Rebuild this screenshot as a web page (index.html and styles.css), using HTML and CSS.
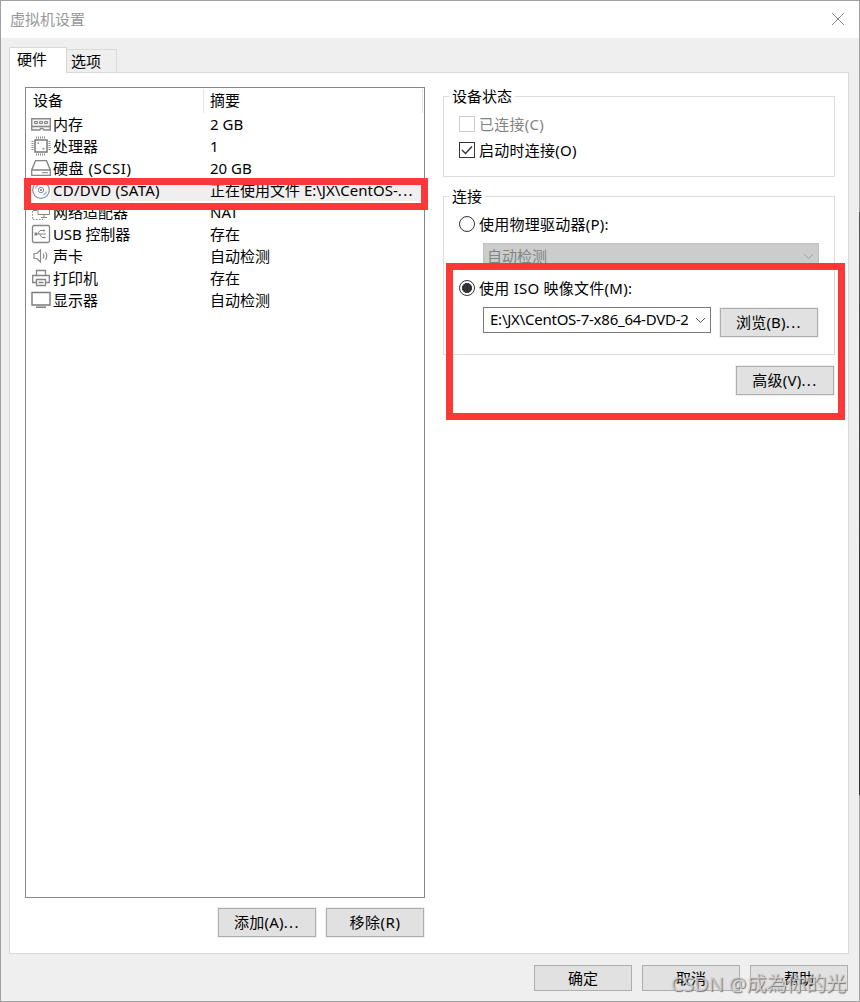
FILE: index.html
```html
<!DOCTYPE html>
<html lang="zh-CN">
<head>
<meta charset="utf-8">
<title>虚拟机设置</title>
<link rel="stylesheet" href="styles.css">
</head>
<body>
<div class="window">
  <header class="titlebar">
    <span class="title">虚拟机设置</span>
    <svg class="close" width="14" height="14" viewBox="0 0 14 14"><path d="M1 1l12 12M13 1L1 13" stroke="#8a8a8a" fill="none"/></svg>
  </header>
  <nav class="tabs">
    <div class="tab active">硬件</div>
    <div class="tab">选项</div>
  </nav>
  <main class="panel">
    <section class="left">
      <div class="list">
        <div class="head"><span class="h-device">设备</span><span class="h-summary">摘要</span></div>
        <div class="row">
          <svg class="icon" viewBox="0 0 20 20"><path d="M.7 4.700h18.600v11.300h-6.500l-1-1.500h-2l-1 1.500H.7z" fill="#f2f2f2" stroke="#8b8b8b" stroke-width="1.400"/><path d="M3.500 7.500h3v2h-3zM8.500 7.500h3v2h-3zM13.500 7.500h3v2h-3z" fill="#ddd" stroke="#858585"/><path d="M1 12.500h18" stroke="#858585" stroke-width="1.500"/></svg>
          <span class="name">内存</span><span class="value">2 GB</span></div>
        <div class="row">
          <svg class="icon" viewBox="0 0 20 20"><rect x="4" y="4" width="12" height="12" fill="none" stroke="#777" stroke-width="1.500"/><path d="M5.500 .5v2M7.500 .5v2M9.500 .5v2M11.500 .5v2M13.500 .5v2M5.500 17.500v2M7.500 17.500v2M9.500 17.500v2M11.500 17.500v2M13.500 17.500v2M.5 5.500h2M.5 7.500h2M.5 9.500h2M.5 11.500h2M.5 13.500h2M17.500 5.500h2M17.500 7.500h2M17.500 9.500h2M17.500 11.500h2M17.500 13.500h2" stroke="#888"/><path d="M6.500 6.500h1.500v1.500H6.500zM11.500 12h2v1.500h-2z" fill="#888"/></svg>
          <span class="name">处理器</span><span class="value">1</span></div>
        <div class="row">
          <svg class="icon" viewBox="0 0 20 20"><path d="M4.500 2.700h11l3.800 9.300v5.300H.7V12zM.7 12h18.600" fill="none" stroke="#858585" stroke-width="1.300"/><path d="M11 14.700h6" stroke="#858585"/></svg>
          <span class="name wide">硬盘 (SCSI)</span><span class="value">20 GB</span></div>
        <div class="row selected">
          <svg class="icon" viewBox="0 0 20 20"><g fill="none"><circle cx="10" cy="10" r="8.300" stroke="#7f98a8" stroke-width="1.300"/><circle cx="10" cy="10" r="2.700" stroke="#7894a5"/><path d="M4.500 8.500a6 6 0 0 1 3-3.500M15.500 11.500a6 6 0 0 1-3 3.500" stroke="#a3bccb" stroke-width="1.500"/></g><circle cx="10" cy="10" r="1" fill="#4f7892"/></svg>
          <span class="name cd">CD/DVD (SATA)</span><span class="value file">正在使用文件 E:\JX\CentOS-<span class="dots">...</span></span></div>
        <div class="row">
          <svg class="icon" viewBox="0 0 20 20"><g fill="none" stroke="#858585"><path d="M7 2.500h11.500v10H7zM10 15.500h6M13 13v2"/><path d="M1.500 6v11.500H12" stroke-dasharray="1.500 1.500"/><path d="M2 8.500h4"/></g></svg>
          <span class="name">网络适配器</span><span class="value">NAT</span></div>
        <div class="row">
          <svg class="icon" viewBox="0 0 20 20"><g fill="none" stroke="#858585"><rect x="1.500" y="1.500" width="17" height="17" rx="1.500" stroke-width="1.300"/><path d="M4 10h11M6.500 10l2.500-3.500h3.500M8.500 10l2.500 3.500h2.500"/></g><path d="M3.500 8.500h2.500v3h-2.500zM12 5.700h2v1.600h-2zM12.500 12.700h2v1.600h-2z" fill="#858585"/></svg>
          <span class="name usb">USB 控制器</span><span class="value">存在</span></div>
        <div class="row">
          <svg class="icon" viewBox="0 0 20 20"><path d="M3 7.500h3l3.500-3.500v12L6 12.500H3zM12 7.500q1.700 2.500 0 5M14.500 6q2.500 4 0 8" fill="none" stroke="#8b8b8b" stroke-width="1.200"/></svg>
          <span class="name">声卡</span><span class="value">自动检测</span></div>
        <div class="row">
          <svg class="icon" viewBox="0 0 20 20"><path d="M5.500 7V2.500h9V7M5 14.500H1.700V7.500h16.600v7H15M5.500 11.500h9v6h-9zM7.500 14.500h5" fill="none" stroke="#858585" stroke-width="1.300"/></svg>
          <span class="name">打印机</span><span class="value">存在</span></div>
        <div class="row">
          <svg class="icon" viewBox="0 0 20 20"><path d="M1 2.500h18v12.500H1z" fill="none" stroke="#7b7b7b" stroke-width="1.400"/><path d="M5 17.200h10" stroke="#858585" stroke-width="1.600"/></svg>
          <span class="name">显示器</span><span class="value">自动检测</span></div>
      </div>
      <div class="buttons">
        <button class="btn">添加(A)<span class="dots">...</span></button>
        <button class="btn remove">移除(R)</button>
      </div>
    </section>
    <section class="right">
      <div class="group status">
        <span class="legend">设备状态</span>
        <label class="option disabled"><span class="check"></span>已连接(C)</label>
        <label class="option"><span class="check"><svg width="14" height="14" viewBox="0 0 14 14"><path d="M2 7l3.500 3.500L12 3.500" fill="none" stroke="#333" stroke-width="1.400"/></svg></span>启动时连接(O)</label>
      </div>
      <div class="group connection">
        <span class="legend">连接</span>
        <label class="option"><span class="radio"></span>使用物理驱动器(P):</label>
        <div class="combo off"><span class="combo-text">自动检测</span><svg class="arrow" width="11" height="7" viewBox="0 0 11 7"><path d="M1 1l4.500 4.500L10 1" fill="none" stroke="#a0a0a0"/></svg></div>
        <label class="option iso"><span class="radio on"></span><span class="iso-text">使用 ISO 映像文件(M):</span></label>
        <div class="browse">
          <div class="combo"><span class="combo-text path">E:\JX\CentOS-7-x86_64-DVD-2</span><svg class="arrow" width="11" height="7" viewBox="0 0 11 7"><path d="M1 1l4.500 4.500L10 1" fill="none" stroke="#555"/></svg></div>
          <button class="btn">浏览(B)<span class="dots">...</span></button>
        </div>
      </div>
      <button class="btn advanced">高级(V)<span class="dots">...</span></button>
    </section>
  </main>
  <footer class="footer">
    <button class="btn">确定</button>
    <button class="btn">取消</button>
    <button class="btn">帮助</button>
  </footer>
  <div class="edge"></div>
  <div class="mark mark-device"></div>
  <div class="mark mark-iso"></div>
  <div class="watermark">CSDN @成為你的光</div>
</div>
</body>
</html>
```
FILE: styles.css
```css
* { box-sizing: border-box; }
body { margin: 0; }
.window {
  position: relative;
  width: 860px;
  height: 1002px;
  padding: 0 10px 0 8px;
  background: #efefef;
  border: 1px solid #a0a0a0;
  font: 15px/22px "Noto Sans", "Noto Sans CJK SC", sans-serif;
  color: #000;
  white-space: nowrap;
}
.titlebar {
  display: flex;
  justify-content: space-between;
  height: 37px;
  margin: 0 -10px 0 -8px;
  padding: 7px 14px 0 9px;
  background: #fff;
  color: #999;
}
.close { margin-top: 4px; }
.tabs { display: flex; align-items: flex-end; height: 34px; }
.tab {
  width: 50px;
  height: 23px;
  padding-left: 4px;
  border: 1px solid #d9d9d9;
  border-width: 1px 1px 0 0;
}
.tab.active {
  position: relative;
  width: 58px;
  height: 26px;
  margin-bottom: -1px;
  padding-left: 7px;
  border-left-width: 1px;
  background: #fff;
}
.panel {
  display: flex;
  gap: 18px;
  width: 840px;
  height: 882px;
  padding: 14px 0 0 15px;
  background: #fff;
  border: 1px solid #d9d9d9;
}
.left { width: 400px; }
.list { height: 811px; border: 1px solid #828790; }
.head {
  display: flex;
  height: 24px;
  margin: 1px 1px 0 0;
  padding-left: 7px;
  border-right: 1px solid #e5e5e5;
  line-height: 22px;
}
.h-device { width: 171px; border-right: 1px solid #e5e5e5; }
.h-summary { padding-left: 6px; }
.row { display: flex; align-items: center; height: 22px; padding-left: 5px; }
.icon { flex: none; width: 20px; height: 20px; }
.name { flex: none; width: 159px; padding-left: 2px; }
.wide { letter-spacing: .5px; }
.cd { letter-spacing: .27px; }
.usb { letter-spacing: -.1px; }
.row.selected { background: linear-gradient(#efefef, #efefef) 25px 0 no-repeat; }
.dots { letter-spacing: 1.4px; }
.buttons { display: flex; justify-content: flex-end; gap: 10px; margin: 10px 1px 0 0; }
.btn {
  display: block;
  width: 98px;
  height: 29px;
  padding: 0;
  background: #e1e1e1;
  border: 1px solid #adadad;
  box-shadow: 0 0 0 1px #efefef;
  font: inherit;
  line-height: 27px;
  letter-spacing: .2px;
}
.remove { letter-spacing: .5px; }
.right { width: 392px; padding-top: 9px; }
.group { position: relative; border: 1px solid #dcdcdc; }
.legend { position: absolute; top: -12px; left: 5px; padding: 0 3px; background: #fff; }
.status { height: 81px; padding: 16px 0 0 15px; }
.connection { height: 159px; margin-top: 19px; padding: 16px 0 0 15px; }
.option { display: flex; align-items: center; gap: 4px; height: 22px; letter-spacing: .25px; }
.status .option { margin-bottom: 4px; }
.disabled { color: #838383; }
.check { width: 16px; height: 16px; border: 1px solid #333; }
.check svg { display: block; }
.disabled .check { border-color: #ccc; }
.radio { width: 16px; height: 16px; border: 1px solid #333; border-radius: 50%; }
.radio.on { background: radial-gradient(circle, #333 4.700px, transparent 5.300px); }
.combo {
  display: flex;
  align-items: center;
  width: 228px;
  height: 26px;
  padding: 0 4px 0 6px;
  background: #fff;
  border: 1px solid #7a7a7a;
}
.combo-text { flex: 1; min-width: 0; overflow: hidden; margin-right: 7px; }
.path { letter-spacing: -.24px; line-height: 20px; margin-top: -2px; }
.combo.off { width: 336px; margin: 8px 0 0 24px; padding-left: 3px; background: #ccc; border-color: #bfbfbf; color: #838383; }
.iso { margin-top: 8px; }
.browse { display: flex; gap: 9px; margin: 8px 0 0 24px; }
.browse .btn { margin-top: 1px; }
.advanced { margin: 11px 1px 0 auto; }
.footer { display: flex; justify-content: flex-end; gap: 10px; padding: 11px 1px 0 0; }
.footer .btn { height: 26px; line-height: 24px; letter-spacing: 0; box-shadow: none; }
.edge { position: absolute; right: -1px; top: 211px; width: 1px; height: 583px; background: linear-gradient(#555, #333 60%, #333); }
.mark { position: absolute; border: 7px solid #fc3838; }
.mark-device { left: 23px; top: 177px; width: 404px; height: 32px; }
.mark-iso { left: 445px; top: 262px; width: 399px; height: 157px; }
.watermark {
  position: absolute;
  right: 13px;
  bottom: 3px;
  font-size: 20px;
  line-height: 28px;
  letter-spacing: -.1px;
  color: rgba(215, 215, 215, .75);
  text-shadow: 1px 1px 1px #777;
}
```
